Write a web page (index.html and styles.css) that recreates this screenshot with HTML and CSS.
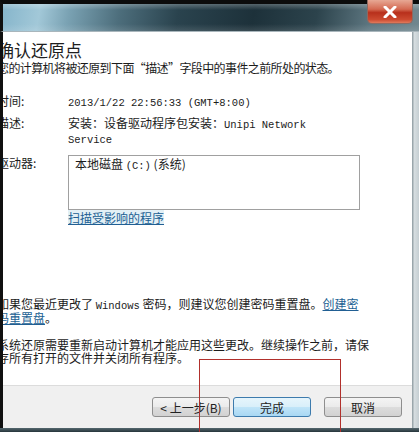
FILE: index.html
```html
<!DOCTYPE html>
<html lang="zh-CN">
  <head>
    <meta charset="UTF-8" />
    <meta name="viewport" content="width=device-width, initial-scale=1.0" />
    <title>系统还原</title>
    <link rel="stylesheet" href="styles.css">
  </head>
  <body>
    <div class="window">
      <header class="titlebar">
        <button class="close" aria-label="关闭">
          <svg width="16" height="12" viewBox="0 0 16 12">
            <path d="M3 1 L13 11 M13 1 L3 11" stroke="#fff" stroke-width="3" stroke-linecap="round"/>
          </svg>
        </button>
      </header>
      <div class="frame">
        <div class="edge-left"></div>
        <div class="dialog">
          <main class="content">
            <h1 class="heading">确认还原点</h1>
            <p class="intro">您的计算机将被还原到下面“描述”字段中的事件之前所处的状态。</p>

            <div class="details">
              <div class="label">时间:</div>
              <div class="value"><span class="en">2013/1/22 22:56:33 (GMT+8:00)</span></div>

              <div class="label">描述:</div>
              <div class="value">安装：设备驱动程序包安装：<span class="en">Unipi Network Service</span></div>

              <div class="label drive-label">驱动器:</div>
              <div class="value">
                <div class="drives">本地磁盘 <span class="en">(C:)</span>&nbsp;(系统)</div>
                <a class="link scan" href="#">扫描受影响的程序</a>
              </div>
            </div>

            <p class="note">如果您最近更改了 <span class="en">Windows</span> 密码，则建议您创建密码重置盘。<a class="link" href="#">创建密码重置盘</a>。</p>
            <p class="note restart">系统还原需要重新启动计算机才能应用这些更改。继续操作之前，请保存所有打开的文件并关闭所有程序。</p>
          </main>
          <footer class="buttons">
            <button class="btn">&lt; 上一步(B)</button>
            <button class="btn primary">完成</button>
            <button class="btn cancel">取消</button>
          </footer>
        </div>
        <div class="edge-right"></div>
      </div>
      <div class="edge-bottom"></div>
      <div class="mark"></div>
    </div>
  </body>
</html>
```

FILE: styles.css
```css
body {
  margin: 0;
  background: #111;
  font-family: "Noto Sans CJK SC", sans-serif;
  font-size: 12px;
  color: #1b1b1b;
}

.window {
  position: relative;
  width: 419px;
  height: 432px;
  display: flex;
  flex-direction: column;
  overflow: hidden;
}

.titlebar {
  height: 27px;
  border-top: 4px solid #0c0c0c;
  border-left: 3px solid #101010;
  border-bottom: 1px solid #a9b6bc;
  background:
    linear-gradient(180deg, rgba(255,255,255,0.25) 0, rgba(255,255,255,0) 6px, rgba(0,0,0,0) 20px, rgba(255,255,255,0.12) 27px),
    linear-gradient(100deg, #86b5cb 0%, #a2c8d8 9%, #7aa2b3 16%, #4d6e7c 28%, #2a434e 42%, #1d313a 60%, #2c434c 75%, #5d7680 88%, #71878f 100%);
  display: flex;
  justify-content: flex-end;
  padding-right: 6px;
}

.close {
  margin-top: -4px;
  width: 46px;
  height: 24px;
  border: 1px solid #8d6a62;
  border-top: none;
  border-radius: 0 0 5px 5px;
  background: linear-gradient(180deg, #e7a894 0%, #d46a52 40%, #b8301c 55%, #cc4a30 85%, #e07a5c 100%);
  display: flex;
  align-items: center;
  justify-content: center;
  padding: 0;
}

.frame {
  flex: 1;
  display: flex;
  min-height: 0;
}

.edge-left {
  width: 3px;
  background: #101010;
}

.edge-right {
  width: 7px;
  background: linear-gradient(90deg, #9aa6ab 0, #9aa6ab 1px, #d7dee1 2px, #c5ced2 100%);
}

.edge-bottom {
  height: 4px;
  background: linear-gradient(180deg, #55686f, #25343a);
}

.dialog {
  flex: 1;
  background: #fff;
  display: flex;
  flex-direction: column;
  overflow: hidden;
}

.content {
  flex: 1;
  margin-left: -6px;
  padding-top: 8px;
}

.heading {
  margin: 0;
  font-size: 17px;
  font-weight: normal;
  line-height: 20px;
  color: #1e1e1e;
}

.intro {
  margin: 0;
  line-height: 16px;
  letter-spacing: -0.6px;
}

.details {
  display: grid;
  grid-template-columns: 71px 1fr;
  row-gap: 6px;
  margin-top: 17px;
  line-height: 15px;
}

.label {
  white-space: nowrap;
}

.drive-label {
  padding-top: 3px;
}

.value {
  width: 260px;
}

.en {
  font-family: "Liberation Mono", monospace;
  font-size: 10.5px;
  line-height: 1;
}

.drives {
  box-sizing: border-box;
  width: 292px;
  height: 55px;
  border: 1px solid #a0a0a0;
  padding: 0 6px;
  line-height: 15px;
  margin-top: 3px;
}

.link {
  color: #215f93;
  text-decoration: underline;
}

.scan {
  display: inline-block;
  background: #e3f0f6;
  line-height: 15px;
}

.note {
  margin: 0;
  line-height: 13px;
  width: 368px;
}

.details + .note {
  margin-top: 72px;
}

.restart {
  margin-top: 14px;
  width: 377px;
}

.buttons {
  height: 42px;
  background: #f0f0f0;
  border-top: 1px solid #dcdcdc;
  display: flex;
  align-items: center;
  padding: 0 0 0 149px;
  gap: 3px;
}

.btn {
  box-sizing: border-box;
  width: 78px;
  height: 20px;
  padding: 0;
  font-family: "Noto Sans CJK SC", sans-serif;
  font-size: 12px;
  color: #222;
  border: 1px solid #8e8e8e;
  border-radius: 3px;
  background: linear-gradient(180deg, #f4f4f4 0%, #ebebeb 48%, #dcdcdc 52%, #d2d2d2 100%);
}

.primary {
  border-color: #3d7bad;
  background: linear-gradient(180deg, #e6f5fc 0%, #d9effa 48%, #bfe4f8 52%, #a9d8f4 100%);
}

.cancel {
  margin-left: 10px;
}

.mark {
  position: absolute;
  left: 199px;
  top: 359px;
  width: 140px;
  height: 80px;
  border: 1px solid #b1302c;
  pointer-events: none;
}
```
